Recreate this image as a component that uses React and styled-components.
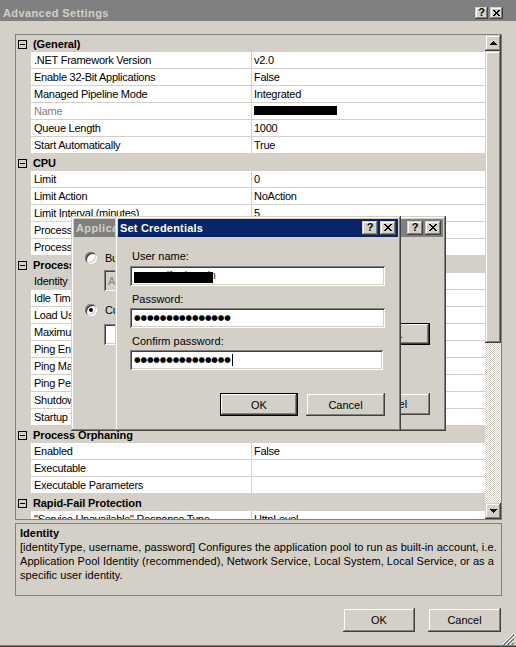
import React from 'react';
import styled, { createGlobalStyle, css } from 'styled-components';

const FONT = `"Liberation Sans", Arial, sans-serif`;

const GlobalStyle = createGlobalStyle`
  html, body { margin: 0; padding: 0; background: #d4d0c8; }
  body { font-family: ${FONT}; font-size: 11px; color: #000; }
  * { box-sizing: border-box; }
`;

const raised = css`
  box-shadow: inset -1px -1px #404040, inset 1px 1px #d4d0c8, inset -2px -2px #808080, inset 2px 2px #fff;
`;
const sunken = css`
  box-shadow: inset 1px 1px #808080, inset -1px -1px #fff, inset 2px 2px #404040, inset -2px -2px #d4d0c8;
`;

const Window = styled.div`
  position: relative;
  width: 516px;
  height: 647px;
  background: #d4d0c8;
  display: flex;
  flex-direction: column;
  overflow: hidden;
  font-family: ${FONT};
  font-size: 11px;
  letter-spacing: -0.25px;
  color: #000;
  box-shadow: inset 0 -1px #404040, inset 0 -2px #808080;
`;

const TitleBar = styled.div`
  flex: none;
  height: ${p => p.$h}px;
  background: ${p => (p.$active ? '#0a246a' : '#808080')};
  color: ${p => (p.$active ? '#fff' : '#d4d0c8')};
  display: flex;
  align-items: center;
  padding: ${p => p.$pad};
  gap: 2px;
  overflow: hidden;
  white-space: nowrap;
`;

const TitleText = styled.div`
  flex: 1;
  font-weight: bold;
  font-size: 11px;
  letter-spacing: ${p => p.$ls || '0'};
  overflow: hidden;
`;

const CaptionBtn = styled.span`
  flex: none;
  width: ${p => p.$w}px;
  height: ${p => p.$h}px;
  background: #d4d0c8;
  ${raised};
  display: flex;
  align-items: center;
  justify-content: center;
  color: #000;
  font-weight: bold;
  font-size: 11px;
  line-height: 1;
  letter-spacing: 0;
  padding-bottom: 1px;
`;

const CloseGlyph = ({ s = 8 }) => (
  <svg width={s} height={s - 1} viewBox="0 0 8 7" shapeRendering="crispEdges">
    <path d="M0 0h2v1h-2zM6 0h2v1h-2zM1 1h2v1h-2zM5 1h2v1h-2zM2 2h4v1h-4zM3 3h2v1h-2zM2 4h4v1h-4zM1 5h2v1h-2zM5 5h2v1h-2zM0 6h2v1h-2zM6 6h2v1h-2z" fill="#000" />
  </svg>
);

const Caption = ({ w, h, s }) => (
  <>
    <CaptionBtn $w={w} $h={h}>?</CaptionBtn>
    <CaptionBtn $w={w} $h={h}><CloseGlyph s={s} /></CaptionBtn>
  </>
);

const Body = styled.div`
  flex: 1;
  display: flex;
  flex-direction: column;
  padding: 13px 14px 0 15px;
`;

const Grid = styled.div`
  flex: none;
  height: 486px;
  border: 1px solid #808080;
  display: flex;
  background: #d4d0c8;
`;

const RowsArea = styled.div`
  flex: 1;
  overflow: hidden;
  display: flex;
  flex-direction: column;
`;

const HeaderRow = styled.div`
  flex: none;
  height: 17px;
  display: flex;
  align-items: center;
  font-weight: bold;
  letter-spacing: -0.1px;
`;

const Expander = styled.span`
  width: 14px;
  padding-left: 2px;
  display: flex;
  align-items: center;
  height: 17px;
  padding-top: 1px;
`;

const HeaderText = styled.span`
  padding-left: 3px;
  padding-top: 1px;
`;

const Row = styled.div`
  flex: none;
  height: 17px;
  padding-bottom: 1px;
  display: grid;
  grid-template-columns: 14px 220px 234px;
  column-gap: 1px;
`;

const Cell = styled.div`
  background: ${p => (p.$selected ? '#d4d0c8' : '#fff')};
  color: ${p => (p.$muted ? '#808080' : '#000')};
  padding-left: ${p => p.$pl}px;
  padding-top: 1px;
  line-height: 15px;
  white-space: nowrap;
  overflow: hidden;
  display: flex;
  align-items: center;
`;

const RedactBlock = styled.span`
  display: inline-block;
  width: ${p => p.$w}px;
  height: ${p => p.$h}px;
  background: #000;
  margin-top: -2px;
`;

const Scrollbar = styled.div`
  flex: none;
  width: 16px;
  display: flex;
  flex-direction: column;
`;

const ScrollBtn = styled.div`
  flex: none;
  height: 16px;
  background: #d4d0c8;
  ${raised};
  display: flex;
  align-items: center;
  justify-content: center;
`;

const Thumb = styled.div`
  flex: none;
  height: 292px;
  background: #d4d0c8;
  ${raised};
`;

const Track = styled.div`
  flex: 1;
  background: repeating-conic-gradient(#fff 0 25%, #d4d0c8 0 50%) 0 0 / 2px 2px;
`;

const Arrow = ({ up }) => (
  <svg width="7" height="4" viewBox="0 0 7 4" shapeRendering="crispEdges">
    <path d={up ? 'M3 0h1v1h-1zM2 1h3v1h-3zM1 2h5v1h-5zM0 3h7v1h-7z' : 'M0 0h7v1h-7zM1 1h5v1h-5zM2 2h3v1h-3zM3 3h1v1h-1z'} fill="#000" />
  </svg>
);

const Minus = () => (
  <svg width="9" height="9" viewBox="0 0 9 9" shapeRendering="crispEdges">
    <rect x="0.5" y="0.5" width="8" height="8" fill="none" stroke="#000" />
    <path d="M2 4h5v1h-5z" fill="#000" />
  </svg>
);

const Description = styled.div`
  flex: none;
  margin-top: 3px;
  height: 73px;
  border: 1px solid #808080;
  padding: 2px 3px 0 4px;
  line-height: 14px;
  letter-spacing: 0.06px;
`;

const DescTitle = styled.div`
  font-weight: bold;
  letter-spacing: 0;
`;

const DescLine = styled.div`
  white-space: nowrap;
`;

const ButtonRow = styled.div`
  flex: none;
  display: flex;
  justify-content: flex-end;
  gap: ${p => p.$gap}px;
  margin-top: ${p => p.$mt || 0}px;
  padding-right: ${p => p.$pr || 0}px;
`;

const PushButton = styled.div`
  width: ${p => p.$w}px;
  height: ${p => p.$h}px;
  background: #d4d0c8;
  display: flex;
  align-items: center;
  justify-content: center;
  letter-spacing: 0;
  ${p =>
    p.$default
      ? css`
          box-shadow: inset 0 0 0 1px #000, inset -2px -2px #404040, inset 2px 2px #fff, inset -3px -3px #808080;
        `
      : raised};
`;

const Grip = styled.div`
  position: absolute;
  right: 2px;
  bottom: 2px;
  width: 12px;
  height: 12px;
  display: flex;
`;

/* ---------- dialogs ---------- */

const Dialog = styled.div`
  position: absolute;
  left: ${p => p.$x}px;
  top: ${p => p.$y}px;
  width: ${p => p.$w}px;
  height: ${p => p.$h}px;
  background: #d4d0c8;
  box-shadow: inset -1px -1px #404040, inset 1px 1px #d4d0c8, inset -2px -2px #808080, inset 2px 2px #fff;
  padding: 3px;
  display: flex;
  flex-direction: column;
  overflow: hidden;
`;

const DialogBody = styled.div`
  flex: 1;
  display: flex;
  flex-direction: column;
  padding: ${p => p.$pad};
  min-width: 0;
`;

const RadioRow = styled.div`
  display: flex;
  align-items: center;
  gap: 8px;
  height: 12px;
  margin-top: ${p => p.$mt || 0}px;
  white-space: nowrap;
`;

const Radio = styled.span`
  position: relative;
  flex: none;
  width: 12px;
  height: 12px;
  border-radius: 50%;
  background: #fff;
  box-shadow: inset 1px 1px #808080, inset -1px -1px #fff, inset 2px 2px #404040, inset -2px -2px #d4d0c8;
  &::after {
    content: '';
    display: ${p => (p.$checked ? 'block' : 'none')};
    position: absolute;
    left: 4px;
    top: 4px;
    width: 4px;
    height: 4px;
    border-radius: 50%;
    background: #000;
  }
`;

const Indented = styled.div`
  display: flex;
  align-items: center;
  margin-left: 19px;
  margin-top: ${p => p.$mt}px;
`;

const Field = styled.div`
  position: relative;
  flex: none;
  width: ${p => p.$w}px;
  height: ${p => p.$h}px;
  background: ${p => (p.$disabled ? '#d4d0c8' : '#fff')};
  color: ${p => (p.$disabled ? '#808080' : '#000')};
  ${sunken};
  display: flex;
  align-items: center;
  padding-left: 4px;
  white-space: nowrap;
  overflow: hidden;
  margin-top: ${p => p.$mt || 0}px;
`;

const FieldLabel = styled.div`
  padding-left: 2px;
  height: 14px;
  line-height: 14px;
  margin-top: ${p => p.$mt}px;
  letter-spacing: 0;
`;

const Dots = styled.span`
  font-family: "DejaVu Sans", sans-serif;
  font-size: 7.5px;
  letter-spacing: -0.1px;
  line-height: 1;
`;

const Caret = styled.span`
  display: inline-block;
  width: 1px;
  height: 12px;
  background: #000;
  margin-left: 1px;
`;

const UserText = styled.span`
  margin-top: -3px;
  color: #333;
`;

const Redaction = styled.span`
  position: absolute;
  left: 4px;
  top: 6px;
  width: 79px;
  height: 11px;
  background: #000;
`;

const Spacer = styled.div`
  flex: 1;
`;

const sections = [
  {
    title: '(General)',
    rows: [
      ['.NET Framework Version', 'v2.0'],
      ['Enable 32-Bit Applications', 'False'],
      ['Managed Pipeline Mode', 'Integrated'],
      ['Name', '', { muted: true, redact: true }],
      ['Queue Length', '1000'],
      ['Start Automatically', 'True'],
    ],
  },
  {
    title: 'CPU',
    rows: [
      ['Limit', '0'],
      ['Limit Action', 'NoAction'],
      ['Limit Interval (minutes)', '5'],
      ['Processor Affinity Enabled', 'False'],
      ['Processor Affinity Mask', '4294967295'],
    ],
  },
  {
    title: 'Process Model',
    rows: [
      ['Identity', 'ApplicationPoolIdentity', { selected: true }],
      ['Idle Time-out (minutes)', '20'],
      ['Load User Profile', 'False'],
      ['Maximum Worker Processes', '1'],
      ['Ping Enabled', 'True'],
      ['Ping Maximum Response Time (seconds)', '90'],
      ['Ping Period (seconds)', '30'],
      ['Shutdown Time Limit (seconds)', '90'],
      ['Startup Time Limit (seconds)', '90'],
    ],
  },
  {
    title: 'Process Orphaning',
    rows: [
      ['Enabled', 'False'],
      ['Executable', ''],
      ['Executable Parameters', ''],
    ],
  },
  {
    title: 'Rapid-Fail Protection',
    rows: [
      ['"Service Unavailable" Response Type', 'HttpLevel'],
      ['Enabled', 'True'],
    ],
  },
];

const GripIcon = () => (
  <svg width="12" height="12" viewBox="0 0 12 12" shapeRendering="crispEdges">
    {[0, 4, 8].map(k => (
      <g key={k}>
        <line x1={12} y1={k} x2={k} y2={12} stroke="#fff" strokeWidth="1" />
        <line x1={12} y1={k + 1} x2={k + 1} y2={12} stroke="#808080" strokeWidth="1" />
        <line x1={12} y1={k + 2} x2={k + 2} y2={12} stroke="#808080" strokeWidth="1" />
      </g>
    ))}
  </svg>
);

export default function App() {
  return (
    <>
      <GlobalStyle />
      <Window>
        <TitleBar $h={21} $pad="5px 13px 0 3px">
          <TitleText $ls="0.4px">Advanced Settings</TitleText>
          <Caption w={13} h={12} s={7} />
        </TitleBar>
        <Body>
          <Grid>
            <RowsArea>
              {sections.map(sec => (
                <React.Fragment key={sec.title}>
                  <HeaderRow>
                    <Expander><Minus /></Expander>
                    <HeaderText>{sec.title}</HeaderText>
                  </HeaderRow>
                  {sec.rows.map(([name, value, opt = {}], i) => (
                    <Row key={sec.title + i}>
                      <span />
                      <Cell $pl={3} $muted={opt.muted} $selected={opt.selected}>{name}</Cell>
                      <Cell $pl={2}>
                        {opt.redact ? <RedactBlock $w={83} $h={9} /> : value}
                      </Cell>
                    </Row>
                  ))}
                </React.Fragment>
              ))}
            </RowsArea>
            <Scrollbar>
              <ScrollBtn><Arrow up /></ScrollBtn>
              <Thumb />
              <Track />
              <ScrollBtn><Arrow /></ScrollBtn>
            </Scrollbar>
          </Grid>
          <Description>
            <DescTitle>Identity</DescTitle>
            <DescLine>[identityType, username, password] Configures the application pool to run as built-in account, i.e.</DescLine>
            <DescLine>Application Pool Identity (recommended), Network Service, Local System, Local Service, or as a</DescLine>
            <DescLine>specific user identity.</DescLine>
          </Description>
          <ButtonRow $gap={13} $mt={12} $pr={1}>
            <PushButton $w={72} $h={24}>OK</PushButton>
            <PushButton $w={73} $h={24}>Cancel</PushButton>
          </ButtonRow>
        </Body>
        <Grip><GripIcon /></Grip>

        <Dialog $x={71} $y={216} $w={375} $h={215}>
          <TitleBar $h={18} $pad="0 2px 0 2px">
            <TitleText $ls="0.4px">Application Pool Identity</TitleText>
            <Caption w={16} h={14} s={8} />
          </TitleBar>
          <DialogBody $pad="15px 13px 13px 11px">
            <RadioRow>
              <Radio />
              <span>Built-in account:</span>
            </RadioRow>
            <Indented $mt={6}>
              <Field $w={240} $h={21} $disabled>ApplicationPoolIdentity</Field>
            </Indented>
            <RadioRow $mt={13}>
              <Radio $checked />
              <span>Custom account:</span>
            </RadioRow>
            <Indented $mt={7}>
              <Field $w={230} $h={21} />
              <Spacer />
              <PushButton $w={80} $h={22} $default>Set...</PushButton>
            </Indented>
            <Spacer />
            <ButtonRow $gap={8}>
              <PushButton $w={80} $h={22}>OK</PushButton>
              <PushButton $w={80} $h={22}>Cancel</PushButton>
            </ButtonRow>
          </DialogBody>
        </Dialog>

        <Dialog $x={115} $y={216} $w={286} $h={215}>
          <TitleBar $h={18} $pad="0 2px 0 2px" $active>
            <TitleText $ls="0.2px">Set Credentials</TitleText>
            <Caption w={16} h={14} s={8} />
          </TitleBar>
          <DialogBody $pad="12px 13px 0 12px">
            <FieldLabel $mt={0}>User name:</FieldLabel>
            <Field $w={255} $h={20} $mt={3}>
              <UserText>ourpoolfordomain</UserText>
              <Redaction />
            </Field>
            <FieldLabel $mt={6}>Password:</FieldLabel>
            <Field $w={255} $h={20} $mt={2}>
              <Dots>●●●●●●●●●●●●●●●</Dots>
            </Field>
            <FieldLabel $mt={6}>Confirm password:</FieldLabel>
            <Field $w={253} $h={20} $mt={2}>
              <Dots>●●●●●●●●●●●●●●●</Dots>
              <Caret />
            </Field>
            <ButtonRow $gap={8} $mt={23}>
              <PushButton $w={78} $h={23} $default>OK</PushButton>
              <PushButton $w={79} $h={23}>Cancel</PushButton>
            </ButtonRow>
          </DialogBody>
        </Dialog>
      </Window>
    </>
  );
}
